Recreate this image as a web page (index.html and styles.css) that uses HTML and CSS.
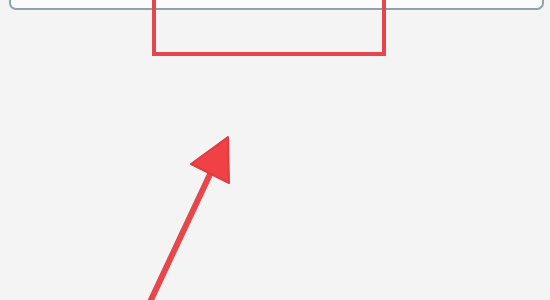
FILE: index.html
```html
<!DOCTYPE html>
<html lang="en">
<head>
  <meta charset="UTF-8">
  <meta name="viewport" content="width=device-width, initial-scale=1.0">
  <title>Screenshot</title>
  <link rel="stylesheet" href="styles.css">
</head>
<body>
  <div class="page">
    <div class="card-bottom"></div>
    <!-- annotation overlay -->
    <div class="mark-box"></div>
    <svg class="mark-arrow" width="550" height="300" viewBox="0 0 550 300">
      <line x1="150" y1="302" x2="212" y2="170" stroke="#e5474b" stroke-width="6" />
      <polygon points="228,137 191,164 229,183" fill="#ef4146" stroke="#e03c42" stroke-width="2" stroke-linejoin="round" />
    </svg>
  </div>
</body>
</html>
```

FILE: styles.css
```css
body, html {
  height: 100%;
  margin: 0;
  font-family: "Liberation Sans", Arial, sans-serif;
}
.page {
  position: relative;
  width: 550px;
  height: 300px;
  background: #f4f4f4;
  overflow: hidden;
}
.card-bottom {
  margin: 0 6px 0 9px;
  height: 8px;
  background: #fbfbfb;
  border: 2px solid #90a3ac;
  border-top: none;
  border-radius: 0 0 7px 7px;
}
.mark-box {
  position: absolute;
  left: 152px;
  top: -10px;
  width: 226px;
  height: 58px;
  border: 4px solid #e1474c;
}
.mark-arrow {
  position: absolute;
  left: 0;
  top: 0;
}
```
